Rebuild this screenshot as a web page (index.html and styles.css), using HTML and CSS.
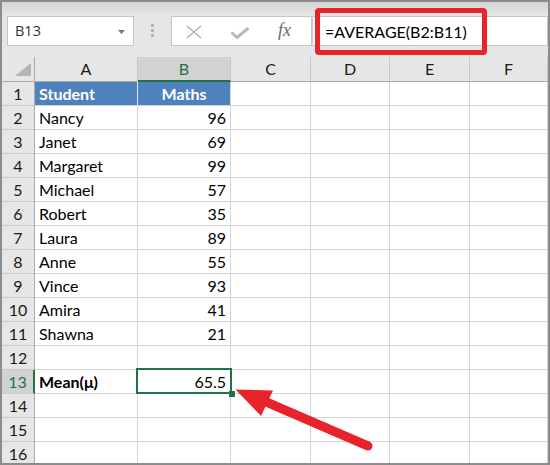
FILE: index.html
```html
<!DOCTYPE html>
<html>
<head>
<meta charset="utf-8">
<link rel="stylesheet" href="styles.css">
</head>
<body>
<div class="frame">
  <div class="toolbar">
    <div class="namebox">
      <span class="ref">B13</span>
      <svg class="caret" width="7" height="4" viewBox="0 0 7 4"><path d="M0 0H7L3.5 4Z" fill="#777"/></svg>
    </div>
    <div class="grip"><i></i><i></i><i></i></div>
    <div class="fxbox">
      <svg class="ico-x" width="16" height="14" viewBox="0 0 16 14"><path d="M1 1L15 13M15 1L1 13" stroke="#b3b3b3" stroke-width="1.6" fill="none"/></svg>
      <svg class="ico-check" width="20" height="12" viewBox="0 0 20 12"><path d="M1.5 5.5L7 10.5L18.5 1" stroke="#b9b9b9" stroke-width="3" fill="none"/></svg>
      <span class="fx">fx</span>
    </div>
    <div class="input">=AVERAGE(B2:B11)</div>
  </div>

  <div class="sheet">
    <div class="corner"><svg width="16" height="13" viewBox="0 0 16 13"><path d="M16 0V13H0Z" fill="#b4b4b4"/></svg></div>
    <div class="ch">A</div><div class="ch sel-col">B</div><div class="ch">C</div><div class="ch">D</div><div class="ch">E</div><div class="ch">F</div>

    <div class="rh">1</div><div class="c hdr hdr-a">Student</div><div class="c hdr center">Maths</div><div class="c"></div><div class="c"></div><div class="c"></div><div class="c"></div>
    <div class="rh">2</div><div class="c">Nancy</div><div class="c num">96</div><div class="c"></div><div class="c"></div><div class="c"></div><div class="c"></div>
    <div class="rh">3</div><div class="c">Janet</div><div class="c num">69</div><div class="c"></div><div class="c"></div><div class="c"></div><div class="c"></div>
    <div class="rh">4</div><div class="c">Margaret</div><div class="c num">99</div><div class="c"></div><div class="c"></div><div class="c"></div><div class="c"></div>
    <div class="rh">5</div><div class="c">Michael</div><div class="c num">57</div><div class="c"></div><div class="c"></div><div class="c"></div><div class="c"></div>
    <div class="rh">6</div><div class="c">Robert</div><div class="c num">35</div><div class="c"></div><div class="c"></div><div class="c"></div><div class="c"></div>
    <div class="rh">7</div><div class="c">Laura</div><div class="c num">89</div><div class="c"></div><div class="c"></div><div class="c"></div><div class="c"></div>
    <div class="rh">8</div><div class="c">Anne</div><div class="c num">55</div><div class="c"></div><div class="c"></div><div class="c"></div><div class="c"></div>
    <div class="rh">9</div><div class="c">Vince</div><div class="c num">93</div><div class="c"></div><div class="c"></div><div class="c"></div><div class="c"></div>
    <div class="rh">10</div><div class="c">Amira</div><div class="c num">41</div><div class="c"></div><div class="c"></div><div class="c"></div><div class="c"></div>
    <div class="rh">11</div><div class="c">Shawna</div><div class="c num">21</div><div class="c"></div><div class="c"></div><div class="c"></div><div class="c"></div>
    <div class="rh">12</div><div class="c"></div><div class="c"></div><div class="c"></div><div class="c"></div><div class="c"></div><div class="c"></div>
    <div class="rh sel-row">13</div><div class="c bold">Mean(μ)</div><div class="c num active">65.5<div class="sel"><div class="handle"></div></div></div><div class="c"></div><div class="c"></div><div class="c"></div><div class="c"></div>
    <div class="rh">14</div><div class="c"></div><div class="c"></div><div class="c"></div><div class="c"></div><div class="c"></div><div class="c"></div>
    <div class="rh">15</div><div class="c"></div><div class="c"></div><div class="c"></div><div class="c"></div><div class="c"></div><div class="c"></div>
    <div class="rh">16</div><div class="c"></div><div class="c"></div><div class="c"></div><div class="c"></div><div class="c"></div><div class="c"></div>
  </div>

  <div class="callout"></div>
  <svg class="arrow" width="550" height="465" viewBox="0 0 550 465">
    <line x1="264" y1="401" x2="368" y2="446" stroke="#e8232c" stroke-width="9" stroke-linecap="round"/>
    <path d="M235.5 389.5L273 390.5L261 416Z" fill="#e8232c"/>
  </svg>
</div>
</body>
</html>
```

FILE: styles.css
```css
* { box-sizing: border-box; }

html, body {
  margin: 0;
  padding: 0;
  background: #fff;
}

.frame {
  position: relative;
  width: 550px;
  height: 465px;
  border: 2px solid #8c8c8c;
  overflow: hidden;
  background: #fff;
  font-family: Lato, "Liberation Sans", sans-serif;
}

.toolbar {
  height: 55px;
  display: flex;
  align-items: flex-start;
  padding: 14px 0 0 5px;
  background: linear-gradient(#d4d4d4 0px, #e6e6e6 13px, #e6e6e6 100%);
}

.namebox {
  width: 127px;
  height: 30px;
  background: #fff;
  border: 1px solid #c6c6c6;
  display: flex;
  align-items: center;
  justify-content: space-between;
  padding: 0 8px 0 7px;
}

.ref {
  font-family: "Open Sans", "Noto Sans", sans-serif;
  font-size: 14.5px;
  color: #333;
  line-height: 28px;
}

.caret { margin-top: 1px; }

.grip {
  margin: 8px 0 0 17px;
  width: 3px;
  display: flex;
  flex-direction: column;
  gap: 2px;
}

.grip i {
  display: block;
  width: 3px;
  height: 3px;
  background: #b4b4b4;
}

.fxbox {
  margin-left: 17px;
  width: 141px;
  height: 30px;
  background: #fff;
  border: 1px solid #c6c6c6;
  display: flex;
  align-items: flex-start;
}

.ico-x { margin: 8px 0 0 14px; }
.ico-check { margin: 10px 0 0 28px; }

.fx {
  margin: 2px 0 0 28px;
  font-family: "Liberation Serif", "DejaVu Serif", serif;
  font-style: italic;
  font-size: 18px;
  line-height: 22px;
  color: #6a6a6a;
}

.input {
  flex: 1;
  height: 30px;
  background: #fff;
  border: 1px solid #c6c6c6;
  border-left: 1px solid #d0d0d0;
  padding-left: 12px;
  font-size: 16px;
  line-height: 30px;
  color: #000;
  white-space: nowrap;
}

.sheet {
  display: grid;
  grid-template-columns: 33px 103px 93px 80px 79px 80px 78px;
  grid-template-rows: 25px repeat(16, 24px);
  font-size: 16px;
}

.corner {
  background: #e6e6e6;
  border-right: 1px solid #ababab;
  border-bottom: 1px solid #ababab;
  padding: 6px 0 0 13px;
}

.corner svg { display: block; }

.ch {
  background: #e6e6e6;
  border-right: 1px solid #c6c6c6;
  border-bottom: 1px solid #ababab;
  text-align: center;
  line-height: 24px;
  color: #1a1a1a;
}

.ch.sel-col {
  background: #d2d2d2;
  color: #217346;
  border-bottom: 2px solid #217346;
}

.rh {
  background: #e6e6e6;
  border-right: 1px solid #ababab;
  border-bottom: 1px solid #c9c9c9;
  text-align: center;
  line-height: 23px;
  color: #1a1a1a;
}

.rh.sel-row {
  background: #d2d2d2;
  color: #217346;
  border-right: 2px solid #217346;
}

.c {
  border-right: 1px solid #d4d4d4;
  border-bottom: 1px solid #d4d4d4;
  padding: 0 4px;
  line-height: 23px;
  color: #000;
  white-space: nowrap;
}

.num { text-align: right; }
.center { text-align: center; }
.bold { font-weight: 700; }

.hdr {
  background: #4f81bd;
  color: #fff;
  font-weight: 700;
}

.hdr-a { border-right-color: #e3e8f0; }

.active { position: relative; }

.sel {
  position: absolute;
  left: -2px;
  top: -2px;
  right: -2px;
  bottom: -1px;
  border: 2px solid #217346;
  z-index: 2;
}

.handle {
  position: absolute;
  right: -5px;
  bottom: -5px;
  width: 6px;
  height: 6px;
  background: #217346;
}

.callout {
  position: absolute;
  left: 313px;
  top: 6px;
  width: 172px;
  height: 47px;
  border: 5px solid #e8232c;
  border-radius: 4px;
}

.arrow {
  position: absolute;
  left: -2px;
  top: -2px;
  pointer-events: none;
  z-index: 3;
}
```
